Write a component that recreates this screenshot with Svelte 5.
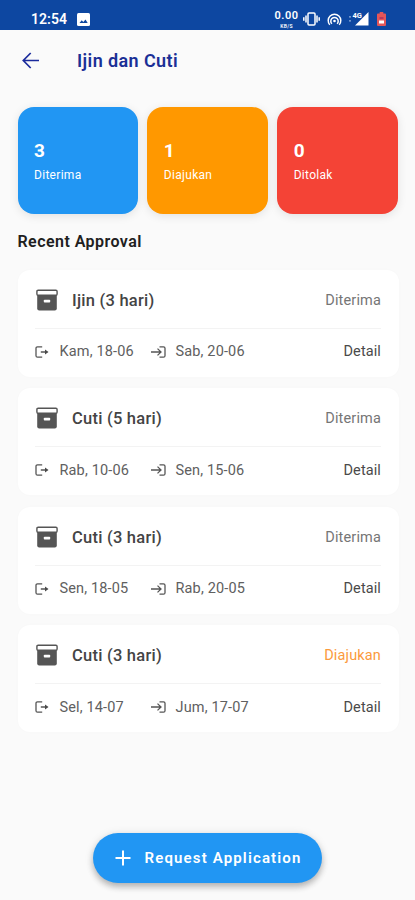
<script>
  const stats = [
    { total: 3, label: 'Diterima', color: 'blue' },
    { total: 1, label: 'Diajukan', color: 'orange' },
    { total: 0, label: 'Ditolak', color: 'red' }
  ]

  const approvals = [
    { title: 'Ijin (3 hari)', status: 'Diterima', from: 'Kam, 18-06', to: 'Sab, 20-06' },
    { title: 'Cuti (5 hari)', status: 'Diterima', from: 'Rab, 10-06', to: 'Sen, 15-06' },
    { title: 'Cuti (3 hari)', status: 'Diterima', from: 'Sen, 18-05', to: 'Rab, 20-05' },
    { title: 'Cuti (3 hari)', status: 'Diajukan', from: 'Sel, 14-07', to: 'Jum, 17-07' }
  ]
</script>

<div class="screen">
  <div class="statusbar">
    <span class="time">12:54</span>
    <svg class="picture" width="13" height="13" viewBox="0 0 13 13">
      <rect width="13" height="13" rx="1.5" fill="#fff" />
      <path d="M2.5 10l2.2-2.8 1.6 1.7L8.5 6.5 10.7 10z" fill="#0d47a1" />
    </svg>
    <div class="indicators">
      <div class="speed"><span>0.00</span><small>KB/S</small></div>
      <svg width="17" height="14" viewBox="0 0 17 14" fill="none" stroke="#fff" stroke-width="1.5">
        <rect x="5" y="1" width="7" height="12" rx="1" />
        <path d="M3 3.5v7M14 3.5v7M.8 5.2v3.6M16.2 5.2v3.6" />
      </svg>
      <svg class="hotspot" width="15" height="13" viewBox="0 0 15 13" fill="none" stroke="#fff" stroke-width="1.5">
        <path d="M2.8 11.8a6.300 6.300 0 1 1 9.400 0M4.900 10.800a3.700 3.700 0 1 1 5.200 0" />
        <circle cx="7.5" cy="8" r="1.3" fill="#fff" stroke="none" />
      </svg>
      <svg class="signal" width="20" height="14" viewBox="0 0 20 14">
        <path d="M19.5 0v13.500H6z" fill="#fff" />
        <path d="M0 4.800h2M0 8.800h2" stroke="#8faedb" stroke-width="1.3" />
        <text x="3.5" y="6.2" font-size="7.5" font-weight="700" fill="#fff" stroke="#0d47a1" stroke-width="1" paint-order="stroke">4G</text>
      </svg>
      <svg class="battery" width="9" height="14" viewBox="0 0 9 14">
        <path d="M2.700 0h3.600v1.500H8q1 0 1 1V13q0 1-1 1H1q-1 0-1-1V2.500q0-1 1-1h1.700z" fill="#e35659" />
        <rect x="2" y="8.5" width="5" height="3" fill="#fff" />
        <path d="M2.500 5h4v2h-4z" fill="#b9385f" />
      </svg>
    </div>
  </div>

  <header>
    <svg width="17" height="17" viewBox="0 0 17 17" fill="none" stroke="#1a2a9c" stroke-width="1.7">
      <path d="M17 8.500H1.500M8.700 1L1.300 8.500l7.400 7.500" />
    </svg>
    <h1>Ijin dan Cuti</h1>
  </header>

  <div class="stats">
    {#each stats as stat}
      <div class="stat {stat.color}">
        <strong>{stat.total}</strong>
        <span>{stat.label}</span>
      </div>
    {/each}
  </div>

  <h2>Recent Approval</h2>

  <div class="list">
    {#each approvals as item}
      <div class="card">
        <div class="top">
          <svg class="archive" width="22" height="22" viewBox="0 0 22 22">
            <path d="M1.200 6h19.600v13.500q0 2-2 2H3.200q-2 0-2-2z" fill="#555" />
            <rect x=".9" y="1.2" width="20.2" height="5" rx="1.2" fill="#fff" stroke="#555" stroke-width="1.4" />
            <rect x="7.8" y="10.7" width="6.4" height="2.8" rx=".8" fill="#fff" />
          </svg>
          <h3>{item.title}</h3>
          <span class="state" class:pending={item.status === 'Diajukan'}>{item.status}</span>
        </div>
        <div class="bottom">
          <svg width="14" height="12" viewBox="0 0 14 12" fill="none" stroke="#555" stroke-width="1.3">
            <path d="M7.200 .8H2.500Q1 .8 1 2.300v7.400q0 1.500 1.500 1.500h4.700M5.800 6H11" />
            <path d="M10 3.600L13.500 6 10 8.400z" fill="#4a4a4a" stroke="none" />
          </svg>
          <span class="date from">{item.from}</span>
          <svg width="15" height="12" viewBox="0 0 15 12" fill="none" stroke="#555" stroke-width="1.3">
            <path d="M8.500 .8h4q1.500 0 1.500 1.500v7.400q0 1.500-1.500 1.500h-4M0 6h9.500M6.500 2.600L10 6 6.500 9.400" />
          </svg>
          <span class="date to">{item.to}</span>
          <span class="detail">Detail</span>
        </div>
      </div>
    {/each}
  </div>

  <button>
    <svg width="16" height="16" viewBox="0 0 16 16" stroke="#fff" stroke-width="2">
      <path d="M8 .5v15M.5 8h15" />
    </svg>
    <span>Request Application</span>
  </button>
</div>

<style>
  :global(body) {
    background: #fafafa;
  }
  .screen {
    display: flex;
    flex-direction: column;
    box-sizing: border-box;
    width: 415px;
    height: 900px;
    overflow: hidden;
    background: #fafafa;
    font-family: Roboto, sans-serif;
    color: #444;
  }
  svg {
    display: block;
    flex: none;
  }
  .statusbar {
    display: flex;
    align-items: center;
    box-sizing: border-box;
    height: 30px;
    padding: 8px 29px 0 31px;
    background: #0d47a1;
    color: #fff;
  }
  .time {
    width: 46px;
    font-size: 14px;
    font-weight: 600;
    line-height: 20px;
    letter-spacing: 0.05px;
  }
  .indicators {
    display: flex;
    align-items: center;
    margin-left: auto;
  }
  .speed {
    display: flex;
    flex-direction: column;
    align-items: center;
    width: 25px;
    margin: -1px 4px 0 0;
    font-size: 11px;
    font-weight: 600;
    letter-spacing: 0.5px;
  }
  .speed span {
    line-height: 14px;
  }
  .speed small {
    font-size: 5px;
    line-height: 6px;
    letter-spacing: 0.3px;
  }
  .hotspot {
    margin-left: 7px;
  }
  .signal {
    margin-left: 7px;
  }
  .battery {
    margin-left: 8px;
  }
  header {
    display: flex;
    align-items: center;
    height: 60px;
    padding-left: 22px;
  }
  h1 {
    margin: 0 0 0 38px;
    font-size: 18px;
    font-weight: 600;
    letter-spacing: 0.4px;
    color: #1a2f96;
  }
  .stats {
    display: grid;
    grid-template-columns: repeat(3, 1fr);
    gap: 9px;
    padding: 17px 17px 0 17.5px;
  }
  .stat {
    display: flex;
    flex-direction: column;
    box-sizing: border-box;
    height: 107px;
    padding: 32px 16.5px 0;
    border-radius: 16px;
    color: #fff;
    box-shadow: 0 2px 10px rgba(0, 0, 0, 0.1);
  }
  .stat strong {
    font-size: 19px;
    font-weight: 700;
    line-height: 23px;
  }
  .stat span {
    margin-top: 5px;
    font-size: 12px;
    line-height: 17px;
    letter-spacing: 0.3px;
  }
  .blue {
    background: #2196f3;
  }
  .orange {
    background: #ff9800;
  }
  .red {
    background: #f44336;
  }
  h2 {
    margin: 18px 0 0 17.5px;
    font-size: 16px;
    font-weight: 600;
    line-height: 20px;
    letter-spacing: 0.45px;
    color: #202020;
  }
  .list {
    display: flex;
    flex-direction: column;
    gap: 11.6px;
    padding: 17.5px 16.5px 0 17.5px;
  }
  .card {
    box-sizing: border-box;
    height: 107px;
    padding: 0 17.5px 0 17px;
    border-radius: 12px;
    background: #fff;
    box-shadow: 0 0 8px rgba(0, 0, 0, 0.012);
  }
  .top {
    display: flex;
    align-items: center;
    box-sizing: border-box;
    height: 59px;
    padding-top: 3px;
    border-bottom: 1px solid #f3f3f3;
  }
  .archive {
    margin-left: 1.5px;
    margin-top: -1px;
  }
  h3 {
    margin: 0 0 0 14px;
    font-size: 16.5px;
    font-weight: 500;
    letter-spacing: 0.24px;
    color: #444;
  }
  .state {
    margin-left: auto;
    font-size: 14.5px;
    letter-spacing: 0.15px;
    color: #757575;
  }
  .pending {
    color: #fb9a3c;
  }
  .bottom {
    display: flex;
    align-items: center;
    height: 46px;
    font-size: 14.5px;
    color: #606060;
  }
  .date {
    white-space: nowrap;
    letter-spacing: 0.15px;
  }
  .from {
    width: 91px;
    margin-left: 11px;
  }
  .to {
    margin-left: 10px;
  }
  .detail {
    margin-left: auto;
    letter-spacing: 0.1px;
    color: #4a4a4a;
  }
  button {
    display: flex;
    align-items: center;
    align-self: center;
    box-sizing: border-box;
    width: 229px;
    height: 50px;
    margin: auto 0 17px;
    padding: 0 0 0 21.5px;
    border: 0;
    border-radius: 25px;
    background: #2196f3;
    color: #fff;
    font-family: inherit;
    font-size: 15px;
    font-weight: 600;
    letter-spacing: 1.15px;
    white-space: nowrap;
    box-shadow: 0 4px 6px rgba(0, 0, 0, 0.24), 0 1px 10px rgba(0, 0, 0, 0.1);
  }
  button span {
    margin-left: 14px;
  }
</style>
